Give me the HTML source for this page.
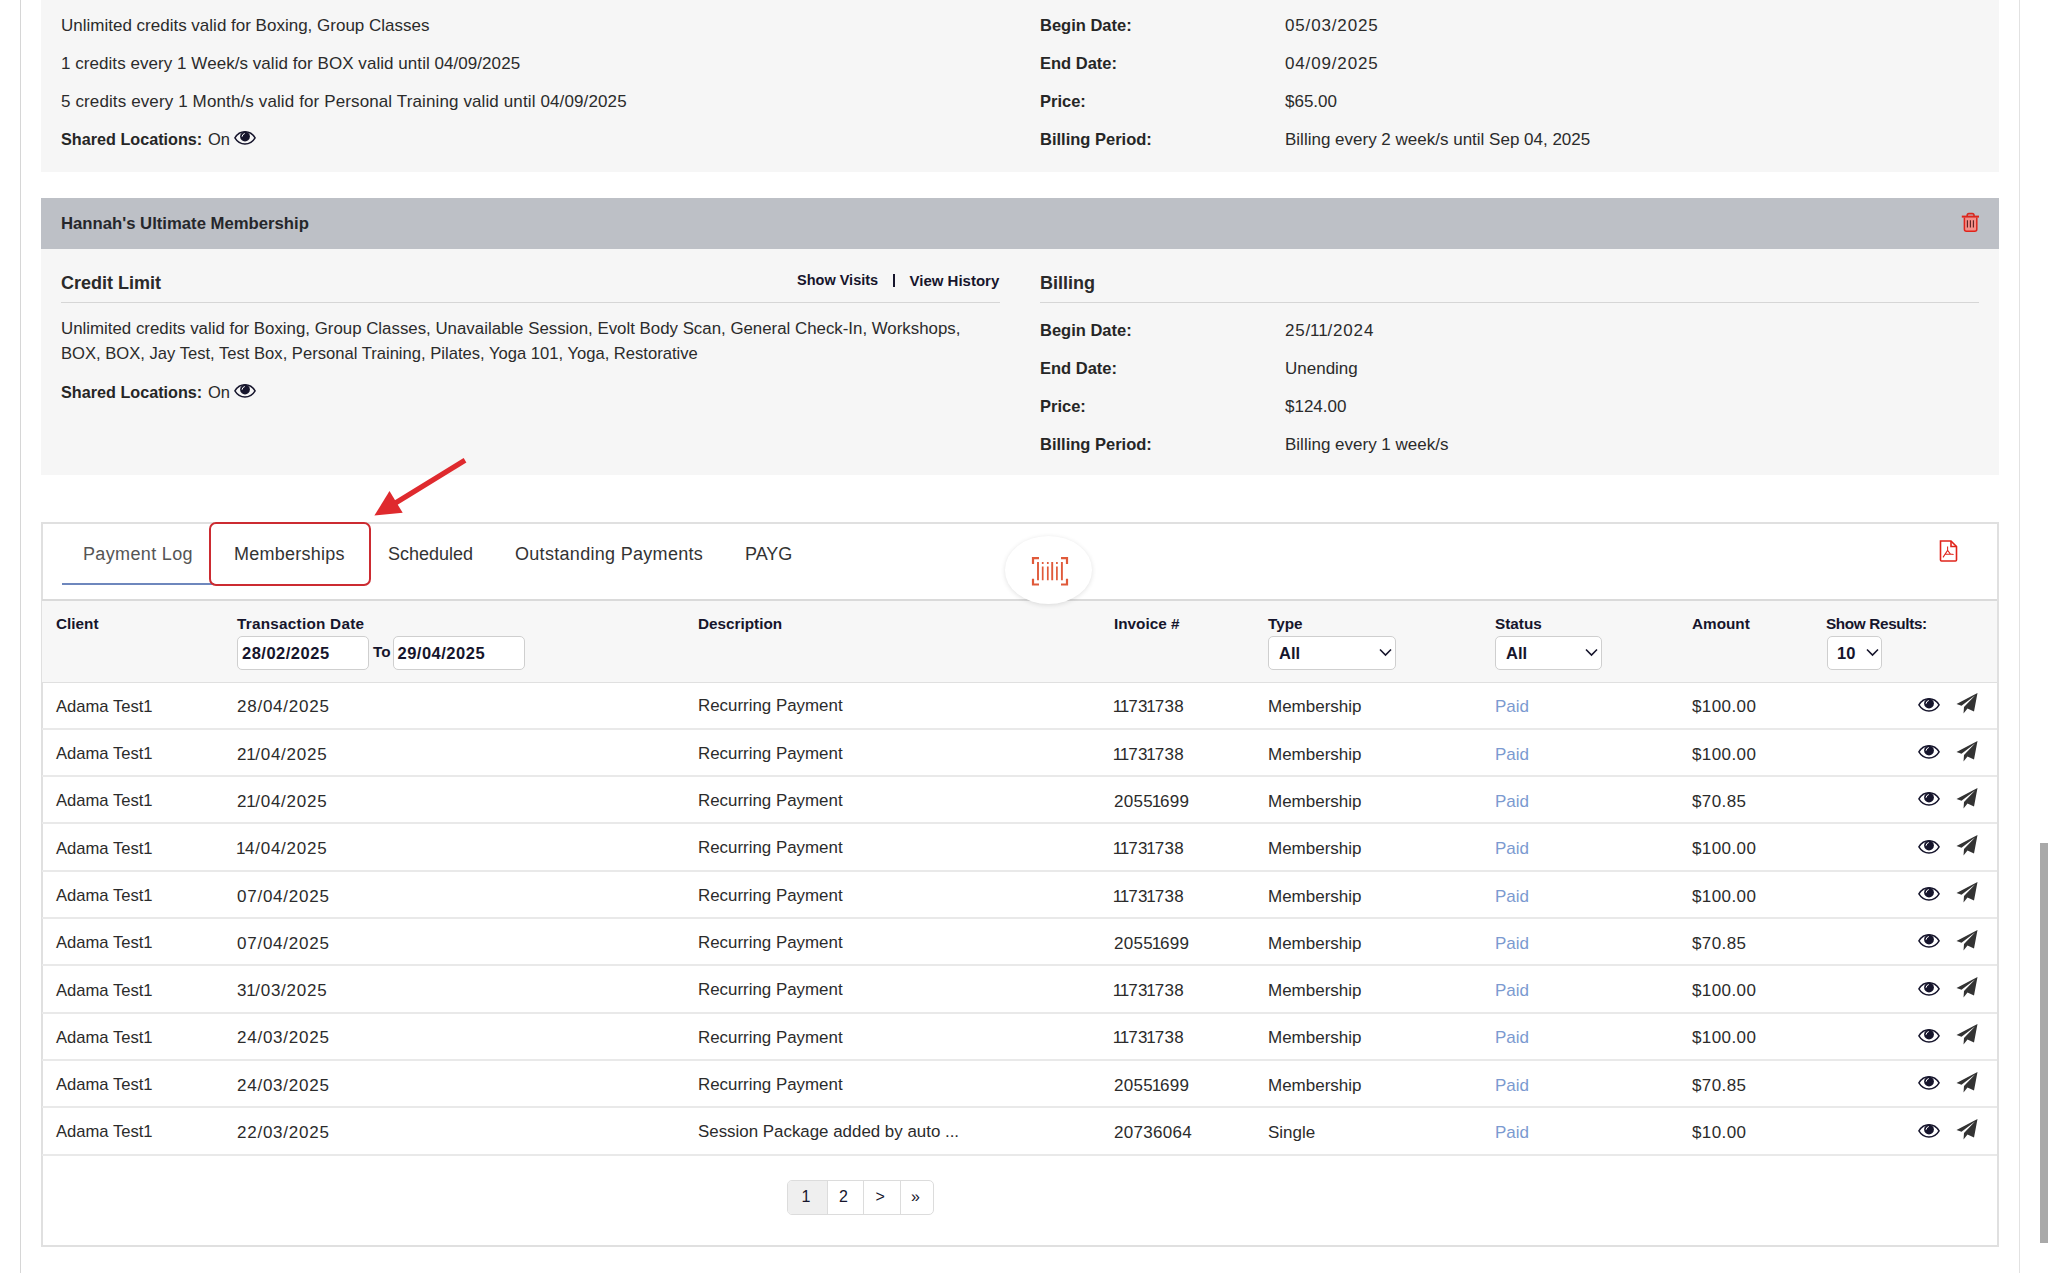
<!DOCTYPE html>
<html><head><meta charset="utf-8"><title>Payments</title>
<style>
html,body{margin:0;padding:0;background:#fff;width:2048px;height:1273px;overflow:hidden;}
body{position:relative;font-family:"Liberation Sans", sans-serif;}
.t{position:absolute;white-space:nowrap;line-height:1;}
.t b{font-weight:700;}
.r{position:absolute;}
svg{display:block;}
</style></head><body>
<div class="r" style="left:20px;top:0px;width:1px;height:1273px;background:#d6d6d6"></div>
<div class="r" style="left:2019px;top:0px;width:1px;height:1273px;background:#e2e2e2"></div>
<div class="r" style="left:2040px;top:843px;width:8px;height:400px;background:#a9a9a9"></div>
<div class="r" style="left:41px;top:0px;width:1958px;height:172px;background:#f6f6f6"></div>
<div class="t" style="left:61px;top:16.61px;font-size:17px;font-weight:400;color:#2b2b2b;">Unlimited credits valid for Boxing, Group Classes</div>
<div class="t" style="left:61px;top:54.61px;font-size:17px;font-weight:400;color:#2b2b2b;letter-spacing:0.05px">1 credits every 1 Week/s valid for BOX valid until 04/09/2025</div>
<div class="t" style="left:61px;top:92.61px;font-size:17px;font-weight:400;color:#2b2b2b;letter-spacing:0.12px">5 credits every 1 Month/s valid for Personal Training valid until 04/09/2025</div>
<div class="t" style="left:61px;top:131.29px;font-size:16.2px;font-weight:700;color:#262626;">Shared Locations:</div>
<div class="t" style="left:208px;top:131.03px;font-size:16.5px;font-weight:400;color:#2b2b2b;">On</div>
<svg width="22" height="14" viewBox="0 0 22 14" style="position:absolute;left:234px;top:131px"><path d="M0.9 6.85 C4 1.6 7.5 0.75 11 0.75 C14.5 0.75 18 1.6 21.1 6.85 C18 12.1 14.5 13 11 13 C7.5 13 4 12.1 0.9 6.85 Z" fill="none" stroke="#16152c" stroke-width="1.45"/><circle cx="11" cy="5.5" r="4.9" fill="#16152c"/><path d="M8.1 5.3 A3.1 3.1 0 0 1 10.4 2.6" stroke="#fff" stroke-width="1" fill="none" stroke-linecap="round"/></svg>
<div class="t" style="left:1040px;top:17.03px;font-size:16.5px;font-weight:700;color:#262626;">Begin Date:</div>
<div class="t" style="left:1285px;top:16.61px;font-size:17px;font-weight:400;color:#2b2b2b;letter-spacing:0.85px">05/03/2025</div>
<div class="t" style="left:1040px;top:55.03px;font-size:16.5px;font-weight:700;color:#262626;">End Date:</div>
<div class="t" style="left:1285px;top:54.61px;font-size:17px;font-weight:400;color:#2b2b2b;letter-spacing:0.85px">04/09/2025</div>
<div class="t" style="left:1040px;top:93.03px;font-size:16.5px;font-weight:700;color:#262626;">Price:</div>
<div class="t" style="left:1285px;top:92.61px;font-size:17px;font-weight:400;color:#2b2b2b;">$65.00</div>
<div class="t" style="left:1040px;top:131.03px;font-size:16.5px;font-weight:700;color:#262626;">Billing Period:</div>
<div class="t" style="left:1285px;top:130.61px;font-size:17px;font-weight:400;color:#2b2b2b;">Billing every 2 week/s until Sep 04, 2025</div>
<div class="r" style="left:41px;top:198px;width:1958px;height:51px;background:#bdc0c6"></div>
<div class="t" style="left:61px;top:215.86px;font-size:16.7px;font-weight:700;color:#26272b;">Hannah's Ultimate Membership</div>
<svg width="22" height="24" viewBox="0 0 22 24" style="position:absolute;left:1960px;top:211px" fill="none"><path d="M4.4 6.5 V18.2 Q4.4 20.2 6.4 20.2 H14.8 Q16.8 20.2 16.8 18.2 V6.5" stroke="#e0241b" stroke-width="1.5" fill="#f4908a"/><path d="M1.8 5.6 H19" stroke="#e0241b" stroke-width="2"/><path d="M7.2 5.6 V4.3 Q7.2 2.6 8.9 2.6 H12.3 Q14 2.6 14 4.3 V5.6" stroke="#d8281f" stroke-width="1.6"/><path d="M7.4 9.2 V16.6 M10.4 9.2 V16.6 M13.4 9.2 V16.6" stroke="#5a1f1f" stroke-width="1.1"/></svg>
<div class="r" style="left:41px;top:249px;width:1958px;height:226px;background:#f6f6f6"></div>
<div class="t" style="left:61px;top:274.36px;font-size:18px;font-weight:700;color:#2a2a2a;">Credit Limit</div>
<div class="t" style="left:797px;top:272.93px;font-size:14.5px;font-weight:700;color:#16152c;">Show Visits</div>
<div class="r" style="left:893px;top:274px;width:1.6px;height:13px;background:#16152c"></div>
<div class="t" style="left:909.5px;top:272.50px;font-size:15px;font-weight:700;color:#16152c;">View History</div>
<div class="r" style="left:61px;top:302px;width:939px;height:1px;background:#d6d6d6"></div>
<div class="t" style="left:1040px;top:274.36px;font-size:18px;font-weight:700;color:#2a2a2a;">Billing</div>
<div class="r" style="left:1040px;top:302px;width:939px;height:1px;background:#d6d6d6"></div>
<div class="t" style="left:61px;top:321.34px;font-size:16.85px;font-weight:400;color:#2b2b2b;">Unlimited credits valid for Boxing, Group Classes, Unavailable Session, Evolt Body Scan, General Check-In, Workshops,</div>
<div class="t" style="left:61px;top:346.45px;font-size:16.6px;font-weight:400;color:#2b2b2b;">BOX, BOX, Jay Test, Test Box, Personal Training, Pilates, Yoga 101, Yoga, Restorative</div>
<div class="t" style="left:61px;top:384.29px;font-size:16.2px;font-weight:700;color:#262626;">Shared Locations:</div>
<div class="t" style="left:208px;top:384.03px;font-size:16.5px;font-weight:400;color:#2b2b2b;">On</div>
<svg width="22" height="14" viewBox="0 0 22 14" style="position:absolute;left:234px;top:384px"><path d="M0.9 6.85 C4 1.6 7.5 0.75 11 0.75 C14.5 0.75 18 1.6 21.1 6.85 C18 12.1 14.5 13 11 13 C7.5 13 4 12.1 0.9 6.85 Z" fill="none" stroke="#16152c" stroke-width="1.45"/><circle cx="11" cy="5.5" r="4.9" fill="#16152c"/><path d="M8.1 5.3 A3.1 3.1 0 0 1 10.4 2.6" stroke="#fff" stroke-width="1" fill="none" stroke-linecap="round"/></svg>
<div class="t" style="left:1040px;top:322.03px;font-size:16.5px;font-weight:700;color:#262626;">Begin Date:</div>
<div class="t" style="left:1285px;top:321.61px;font-size:17px;font-weight:400;color:#2b2b2b;letter-spacing:0.85px">25/<span style="margin-left:-1.10px;letter-spacing:-0.25px">1</span><span style="margin-left:-1.10px;letter-spacing:-0.25px">1</span>/2024</div>
<div class="t" style="left:1040px;top:360.03px;font-size:16.5px;font-weight:700;color:#262626;">End Date:</div>
<div class="t" style="left:1285px;top:359.61px;font-size:17px;font-weight:400;color:#2b2b2b;">Unending</div>
<div class="t" style="left:1040px;top:398.03px;font-size:16.5px;font-weight:700;color:#262626;">Price:</div>
<div class="t" style="left:1285px;top:397.61px;font-size:17px;font-weight:400;color:#2b2b2b;">$124.00</div>
<div class="t" style="left:1040px;top:436.03px;font-size:16.5px;font-weight:700;color:#262626;">Billing Period:</div>
<div class="t" style="left:1285px;top:435.61px;font-size:17px;font-weight:400;color:#2b2b2b;">Billing every 1 week/s</div>
<svg width="120" height="80" viewBox="0 0 120 80" style="position:absolute;left:360px;top:450px"><path d="M105 10.2 L33 54.5" stroke="#df2a2e" stroke-width="5.2" stroke-linecap="butt"/><path d="M14.4 65.6 L29.5 41.1 L42.7 62.8 Z" fill="#df2a2e"/></svg>
<div class="r" style="left:41px;top:522px;width:1958px;height:725px;border:2px solid #e0e0e0;box-sizing:border-box;background:#fff"></div>
<div class="t" style="left:83px;top:545.26px;font-size:18px;font-weight:400;color:#555;letter-spacing:0.35px">Payment Log</div>
<div class="t" style="left:234px;top:545.26px;font-size:18px;font-weight:400;color:#333;letter-spacing:0.25px">Memberships</div>
<div class="t" style="left:388px;top:545.26px;font-size:18px;font-weight:400;color:#333;">Scheduled</div>
<div class="t" style="left:515px;top:545.26px;font-size:18px;font-weight:400;color:#333;letter-spacing:0.3px">Outstanding Payments</div>
<div class="t" style="left:745px;top:545.26px;font-size:18px;font-weight:400;color:#333;">PAYG</div>
<div class="r" style="left:62px;top:583px;width:152px;height:2px;background:#6e87bd"></div>
<div class="r" style="left:209px;top:522px;width:161.5px;height:63.5px;border:2.8px solid #cc2b31;border-radius:7px;box-sizing:border-box"></div>
<div class="r" style="left:42px;top:599px;width:1955px;height:2px;background:#dadada"></div>
<svg width="22" height="24" viewBox="0 0 22 24" style="position:absolute;left:1938px;top:539px" fill="none" stroke="#e0241b" stroke-width="1.6"><path d="M2.5 2 H13 L18.5 7.5 V21 Q18.5 22 17.5 22 H3.5 Q2.5 22 2.5 21 Z"/><path d="M13 2 V7.5 H18.5" /><path d="M9.6 7.4 V11.4 L5 18.4 M9.6 11.4 L12.4 15.1 L15.6 15.5 M7.3 15.3 L12.4 15.1" stroke-width="1.05"/></svg>
<div class="r" style="left:42px;top:601px;width:1955px;height:81px;background:#f7f7f7"></div>
<div class="r" style="left:42px;top:681.5px;width:1955px;height:1.5px;background:#e0e0e0"></div>
<div class="r" style="left:1005px;top:536px;width:87px;height:67.5px;border-radius:50%;background:#fff;box-shadow:0 1px 5px rgba(0,0,0,0.12)"></div>
<svg width="40" height="34" viewBox="0 0 40 34" style="position:absolute;left:1030px;top:554px" fill="none" stroke="#e05a3a"><path d="M3 10 V4.2 H9 M31 4.2 H37 V10 M3 24.8 V30.5 H9 M31 30.5 H37 V24.8" stroke-width="2.2"/><path d="M8 8 V26.3 M22.2 8 V26.3 M31.9 8 V26.3" stroke-width="1.9"/><path d="M12.7 12.5 V26.3 M17.8 12.5 V26.3 M26.9 12.5 V26.3 M12.7 8 V10 M17.8 8 V10 M26.9 8 V10" stroke-width="1.7"/></svg>
<div class="t" style="left:56px;top:616.35px;font-size:15.3px;font-weight:700;color:#16152c;letter-spacing:0px">Client</div>
<div class="t" style="left:237px;top:616.35px;font-size:15.3px;font-weight:700;color:#16152c;letter-spacing:0.25px">Transaction Date</div>
<div class="t" style="left:698px;top:616.35px;font-size:15.3px;font-weight:700;color:#16152c;letter-spacing:0px">Description</div>
<div class="t" style="left:1114px;top:616.35px;font-size:15.3px;font-weight:700;color:#16152c;letter-spacing:0px">Invoice #</div>
<div class="t" style="left:1268px;top:616.35px;font-size:15.3px;font-weight:700;color:#16152c;letter-spacing:0px">Type</div>
<div class="t" style="left:1495px;top:616.35px;font-size:15.3px;font-weight:700;color:#16152c;letter-spacing:0px">Status</div>
<div class="t" style="left:1692px;top:616.35px;font-size:15.3px;font-weight:700;color:#16152c;letter-spacing:0px">Amount</div>
<div class="t" style="left:1826px;top:616.35px;font-size:15.3px;font-weight:700;color:#16152c;letter-spacing:-0.35px">Show Results:</div>
<div class="r" style="left:237px;top:636px;width:132px;height:34px;border:1px solid #cfcfcf;border-radius:5px;background:#fff;box-sizing:border-box"></div>
<div class="r" style="left:393px;top:636px;width:132px;height:34px;border:1px solid #cfcfcf;border-radius:5px;background:#fff;box-sizing:border-box"></div>
<div class="r" style="left:1268px;top:636px;width:128px;height:34px;border:1px solid #cfcfcf;border-radius:5px;background:#fff;box-sizing:border-box"></div>
<div class="r" style="left:1495px;top:636px;width:107px;height:34px;border:1px solid #cfcfcf;border-radius:5px;background:#fff;box-sizing:border-box"></div>
<div class="r" style="left:1827px;top:636px;width:55px;height:34px;border:1px solid #cfcfcf;border-radius:5px;background:#fff;box-sizing:border-box"></div>
<div class="t" style="left:242px;top:644.63px;font-size:16.5px;font-weight:700;color:#16152c;letter-spacing:0.5px">28/02/2025</div>
<div class="t" style="left:373px;top:643.55px;font-size:15.3px;font-weight:700;color:#16152c;">To</div>
<div class="t" style="left:397.5px;top:644.63px;font-size:16.5px;font-weight:700;color:#16152c;letter-spacing:0.5px">29/04/2025</div>
<div class="t" style="left:1279px;top:644.63px;font-size:16.5px;font-weight:700;color:#16152c;">All</div>
<div class="t" style="left:1506px;top:644.63px;font-size:16.5px;font-weight:700;color:#16152c;">All</div>
<div class="t" style="left:1837px;top:644.63px;font-size:16.5px;font-weight:700;color:#16152c;">10</div>
<svg width="13" height="9" viewBox="0 0 13 9" style="position:absolute;left:1379px;top:648px"><path d="M1 1.5 L6.5 7 L12 1.5" fill="none" stroke="#16152c" stroke-width="1.6"/></svg>
<svg width="13" height="9" viewBox="0 0 13 9" style="position:absolute;left:1584.5px;top:648px"><path d="M1 1.5 L6.5 7 L12 1.5" fill="none" stroke="#16152c" stroke-width="1.6"/></svg>
<svg width="13" height="9" viewBox="0 0 13 9" style="position:absolute;left:1865.5px;top:648px"><path d="M1 1.5 L6.5 7 L12 1.5" fill="none" stroke="#16152c" stroke-width="1.6"/></svg>
<div class="t" style="left:56px;top:698.65px;font-size:16.6px;font-weight:400;color:#2b2b2b;">Adama Test1</div>
<div class="t" style="left:237px;top:698.31px;font-size:17px;font-weight:400;color:#2b2b2b;letter-spacing:0.75px">28/04/2025</div>
<div class="t" style="left:698px;top:698.39px;font-size:16.9px;font-weight:400;color:#2b2b2b;">Recurring Payment</div>
<div class="t" style="left:1114px;top:698.31px;font-size:17px;font-weight:400;color:#2b2b2b;letter-spacing:0.3px"><span style="margin-left:-1.30px;letter-spacing:-1.10px">1</span><span style="margin-left:-1.30px;letter-spacing:-1.10px">1</span>73<span style="margin-left:-1.30px;letter-spacing:-1.10px">1</span>738</div>
<div class="t" style="left:1268px;top:698.31px;font-size:17px;font-weight:400;color:#2b2b2b;">Membership</div>
<div class="t" style="left:1495px;top:698.31px;font-size:17px;font-weight:400;color:#7b9ad0;">Paid</div>
<div class="t" style="left:1692px;top:698.31px;font-size:17px;font-weight:400;color:#2b2b2b;letter-spacing:0.4px">$100.00</div>
<svg width="22" height="14" viewBox="0 0 22 14" style="position:absolute;left:1918px;top:697.7px"><path d="M0.9 6.85 C4 1.6 7.5 0.75 11 0.75 C14.5 0.75 18 1.6 21.1 6.85 C18 12.1 14.5 13 11 13 C7.5 13 4 12.1 0.9 6.85 Z" fill="none" stroke="#16152c" stroke-width="1.45"/><circle cx="11" cy="5.5" r="4.9" fill="#16152c"/><path d="M8.1 5.3 A3.1 3.1 0 0 1 10.4 2.6" stroke="#fff" stroke-width="1" fill="none" stroke-linecap="round"/></svg>
<svg width="24" height="22" viewBox="0 0 24 22" style="position:absolute;left:1955px;top:692.2px"><path d="M22.5 1 L1.5 12 L6.5 13.8 L20 3.5 L9 15 L8.5 21.5 L12.5 16.5 L19 19.5 Z" fill="#333"/></svg>
<div class="r" style="left:42px;top:728px;width:1955px;height:2px;background:#e9e9e9"></div>
<div class="t" style="left:56px;top:745.96px;font-size:16.6px;font-weight:400;color:#2b2b2b;">Adama Test1</div>
<div class="t" style="left:237px;top:745.62px;font-size:17px;font-weight:400;color:#2b2b2b;letter-spacing:0.75px">2<span style="margin-left:-1.10px;letter-spacing:-0.35px">1</span>/04/2025</div>
<div class="t" style="left:698px;top:745.70px;font-size:16.9px;font-weight:400;color:#2b2b2b;">Recurring Payment</div>
<div class="t" style="left:1114px;top:745.62px;font-size:17px;font-weight:400;color:#2b2b2b;letter-spacing:0.3px"><span style="margin-left:-1.30px;letter-spacing:-1.10px">1</span><span style="margin-left:-1.30px;letter-spacing:-1.10px">1</span>73<span style="margin-left:-1.30px;letter-spacing:-1.10px">1</span>738</div>
<div class="t" style="left:1268px;top:745.62px;font-size:17px;font-weight:400;color:#2b2b2b;">Membership</div>
<div class="t" style="left:1495px;top:745.62px;font-size:17px;font-weight:400;color:#7b9ad0;">Paid</div>
<div class="t" style="left:1692px;top:745.62px;font-size:17px;font-weight:400;color:#2b2b2b;letter-spacing:0.4px">$100.00</div>
<svg width="22" height="14" viewBox="0 0 22 14" style="position:absolute;left:1918px;top:745.0px"><path d="M0.9 6.85 C4 1.6 7.5 0.75 11 0.75 C14.5 0.75 18 1.6 21.1 6.85 C18 12.1 14.5 13 11 13 C7.5 13 4 12.1 0.9 6.85 Z" fill="none" stroke="#16152c" stroke-width="1.45"/><circle cx="11" cy="5.5" r="4.9" fill="#16152c"/><path d="M8.1 5.3 A3.1 3.1 0 0 1 10.4 2.6" stroke="#fff" stroke-width="1" fill="none" stroke-linecap="round"/></svg>
<svg width="24" height="22" viewBox="0 0 24 22" style="position:absolute;left:1955px;top:739.5px"><path d="M22.5 1 L1.5 12 L6.5 13.8 L20 3.5 L9 15 L8.5 21.5 L12.5 16.5 L19 19.5 Z" fill="#333"/></svg>
<div class="r" style="left:42px;top:775px;width:1955px;height:2px;background:#e9e9e9"></div>
<div class="t" style="left:56px;top:793.27px;font-size:16.6px;font-weight:400;color:#2b2b2b;">Adama Test1</div>
<div class="t" style="left:237px;top:792.93px;font-size:17px;font-weight:400;color:#2b2b2b;letter-spacing:0.75px">2<span style="margin-left:-1.10px;letter-spacing:-0.35px">1</span>/04/2025</div>
<div class="t" style="left:698px;top:793.01px;font-size:16.9px;font-weight:400;color:#2b2b2b;">Recurring Payment</div>
<div class="t" style="left:1114px;top:792.93px;font-size:17px;font-weight:400;color:#2b2b2b;letter-spacing:0.3px">2055<span style="margin-left:-1.30px;letter-spacing:-1.10px">1</span>699</div>
<div class="t" style="left:1268px;top:792.93px;font-size:17px;font-weight:400;color:#2b2b2b;">Membership</div>
<div class="t" style="left:1495px;top:792.93px;font-size:17px;font-weight:400;color:#7b9ad0;">Paid</div>
<div class="t" style="left:1692px;top:792.93px;font-size:17px;font-weight:400;color:#2b2b2b;letter-spacing:0.4px">$70.85</div>
<svg width="22" height="14" viewBox="0 0 22 14" style="position:absolute;left:1918px;top:792.3px"><path d="M0.9 6.85 C4 1.6 7.5 0.75 11 0.75 C14.5 0.75 18 1.6 21.1 6.85 C18 12.1 14.5 13 11 13 C7.5 13 4 12.1 0.9 6.85 Z" fill="none" stroke="#16152c" stroke-width="1.45"/><circle cx="11" cy="5.5" r="4.9" fill="#16152c"/><path d="M8.1 5.3 A3.1 3.1 0 0 1 10.4 2.6" stroke="#fff" stroke-width="1" fill="none" stroke-linecap="round"/></svg>
<svg width="24" height="22" viewBox="0 0 24 22" style="position:absolute;left:1955px;top:786.8px"><path d="M22.5 1 L1.5 12 L6.5 13.8 L20 3.5 L9 15 L8.5 21.5 L12.5 16.5 L19 19.5 Z" fill="#333"/></svg>
<div class="r" style="left:42px;top:822px;width:1955px;height:2px;background:#e9e9e9"></div>
<div class="t" style="left:56px;top:840.58px;font-size:16.6px;font-weight:400;color:#2b2b2b;">Adama Test1</div>
<div class="t" style="left:237px;top:840.24px;font-size:17px;font-weight:400;color:#2b2b2b;letter-spacing:0.75px"><span style="margin-left:-1.10px;letter-spacing:-0.35px">1</span>4/04/2025</div>
<div class="t" style="left:698px;top:840.32px;font-size:16.9px;font-weight:400;color:#2b2b2b;">Recurring Payment</div>
<div class="t" style="left:1114px;top:840.24px;font-size:17px;font-weight:400;color:#2b2b2b;letter-spacing:0.3px"><span style="margin-left:-1.30px;letter-spacing:-1.10px">1</span><span style="margin-left:-1.30px;letter-spacing:-1.10px">1</span>73<span style="margin-left:-1.30px;letter-spacing:-1.10px">1</span>738</div>
<div class="t" style="left:1268px;top:840.24px;font-size:17px;font-weight:400;color:#2b2b2b;">Membership</div>
<div class="t" style="left:1495px;top:840.24px;font-size:17px;font-weight:400;color:#7b9ad0;">Paid</div>
<div class="t" style="left:1692px;top:840.24px;font-size:17px;font-weight:400;color:#2b2b2b;letter-spacing:0.4px">$100.00</div>
<svg width="22" height="14" viewBox="0 0 22 14" style="position:absolute;left:1918px;top:839.6px"><path d="M0.9 6.85 C4 1.6 7.5 0.75 11 0.75 C14.5 0.75 18 1.6 21.1 6.85 C18 12.1 14.5 13 11 13 C7.5 13 4 12.1 0.9 6.85 Z" fill="none" stroke="#16152c" stroke-width="1.45"/><circle cx="11" cy="5.5" r="4.9" fill="#16152c"/><path d="M8.1 5.3 A3.1 3.1 0 0 1 10.4 2.6" stroke="#fff" stroke-width="1" fill="none" stroke-linecap="round"/></svg>
<svg width="24" height="22" viewBox="0 0 24 22" style="position:absolute;left:1955px;top:834.1px"><path d="M22.5 1 L1.5 12 L6.5 13.8 L20 3.5 L9 15 L8.5 21.5 L12.5 16.5 L19 19.5 Z" fill="#333"/></svg>
<div class="r" style="left:42px;top:870px;width:1955px;height:2px;background:#e9e9e9"></div>
<div class="t" style="left:56px;top:887.89px;font-size:16.6px;font-weight:400;color:#2b2b2b;">Adama Test1</div>
<div class="t" style="left:237px;top:887.55px;font-size:17px;font-weight:400;color:#2b2b2b;letter-spacing:0.75px">07/04/2025</div>
<div class="t" style="left:698px;top:887.63px;font-size:16.9px;font-weight:400;color:#2b2b2b;">Recurring Payment</div>
<div class="t" style="left:1114px;top:887.55px;font-size:17px;font-weight:400;color:#2b2b2b;letter-spacing:0.3px"><span style="margin-left:-1.30px;letter-spacing:-1.10px">1</span><span style="margin-left:-1.30px;letter-spacing:-1.10px">1</span>73<span style="margin-left:-1.30px;letter-spacing:-1.10px">1</span>738</div>
<div class="t" style="left:1268px;top:887.55px;font-size:17px;font-weight:400;color:#2b2b2b;">Membership</div>
<div class="t" style="left:1495px;top:887.55px;font-size:17px;font-weight:400;color:#7b9ad0;">Paid</div>
<div class="t" style="left:1692px;top:887.55px;font-size:17px;font-weight:400;color:#2b2b2b;letter-spacing:0.4px">$100.00</div>
<svg width="22" height="14" viewBox="0 0 22 14" style="position:absolute;left:1918px;top:886.9px"><path d="M0.9 6.85 C4 1.6 7.5 0.75 11 0.75 C14.5 0.75 18 1.6 21.1 6.85 C18 12.1 14.5 13 11 13 C7.5 13 4 12.1 0.9 6.85 Z" fill="none" stroke="#16152c" stroke-width="1.45"/><circle cx="11" cy="5.5" r="4.9" fill="#16152c"/><path d="M8.1 5.3 A3.1 3.1 0 0 1 10.4 2.6" stroke="#fff" stroke-width="1" fill="none" stroke-linecap="round"/></svg>
<svg width="24" height="22" viewBox="0 0 24 22" style="position:absolute;left:1955px;top:881.4px"><path d="M22.5 1 L1.5 12 L6.5 13.8 L20 3.5 L9 15 L8.5 21.5 L12.5 16.5 L19 19.5 Z" fill="#333"/></svg>
<div class="r" style="left:42px;top:917px;width:1955px;height:2px;background:#e9e9e9"></div>
<div class="t" style="left:56px;top:935.20px;font-size:16.6px;font-weight:400;color:#2b2b2b;">Adama Test1</div>
<div class="t" style="left:237px;top:934.86px;font-size:17px;font-weight:400;color:#2b2b2b;letter-spacing:0.75px">07/04/2025</div>
<div class="t" style="left:698px;top:934.94px;font-size:16.9px;font-weight:400;color:#2b2b2b;">Recurring Payment</div>
<div class="t" style="left:1114px;top:934.86px;font-size:17px;font-weight:400;color:#2b2b2b;letter-spacing:0.3px">2055<span style="margin-left:-1.30px;letter-spacing:-1.10px">1</span>699</div>
<div class="t" style="left:1268px;top:934.86px;font-size:17px;font-weight:400;color:#2b2b2b;">Membership</div>
<div class="t" style="left:1495px;top:934.86px;font-size:17px;font-weight:400;color:#7b9ad0;">Paid</div>
<div class="t" style="left:1692px;top:934.86px;font-size:17px;font-weight:400;color:#2b2b2b;letter-spacing:0.4px">$70.85</div>
<svg width="22" height="14" viewBox="0 0 22 14" style="position:absolute;left:1918px;top:934.2px"><path d="M0.9 6.85 C4 1.6 7.5 0.75 11 0.75 C14.5 0.75 18 1.6 21.1 6.85 C18 12.1 14.5 13 11 13 C7.5 13 4 12.1 0.9 6.85 Z" fill="none" stroke="#16152c" stroke-width="1.45"/><circle cx="11" cy="5.5" r="4.9" fill="#16152c"/><path d="M8.1 5.3 A3.1 3.1 0 0 1 10.4 2.6" stroke="#fff" stroke-width="1" fill="none" stroke-linecap="round"/></svg>
<svg width="24" height="22" viewBox="0 0 24 22" style="position:absolute;left:1955px;top:928.8px"><path d="M22.5 1 L1.5 12 L6.5 13.8 L20 3.5 L9 15 L8.5 21.5 L12.5 16.5 L19 19.5 Z" fill="#333"/></svg>
<div class="r" style="left:42px;top:964px;width:1955px;height:2px;background:#e9e9e9"></div>
<div class="t" style="left:56px;top:982.51px;font-size:16.6px;font-weight:400;color:#2b2b2b;">Adama Test1</div>
<div class="t" style="left:237px;top:982.17px;font-size:17px;font-weight:400;color:#2b2b2b;letter-spacing:0.75px">3<span style="margin-left:-1.10px;letter-spacing:-0.35px">1</span>/03/2025</div>
<div class="t" style="left:698px;top:982.25px;font-size:16.9px;font-weight:400;color:#2b2b2b;">Recurring Payment</div>
<div class="t" style="left:1114px;top:982.17px;font-size:17px;font-weight:400;color:#2b2b2b;letter-spacing:0.3px"><span style="margin-left:-1.30px;letter-spacing:-1.10px">1</span><span style="margin-left:-1.30px;letter-spacing:-1.10px">1</span>73<span style="margin-left:-1.30px;letter-spacing:-1.10px">1</span>738</div>
<div class="t" style="left:1268px;top:982.17px;font-size:17px;font-weight:400;color:#2b2b2b;">Membership</div>
<div class="t" style="left:1495px;top:982.17px;font-size:17px;font-weight:400;color:#7b9ad0;">Paid</div>
<div class="t" style="left:1692px;top:982.17px;font-size:17px;font-weight:400;color:#2b2b2b;letter-spacing:0.4px">$100.00</div>
<svg width="22" height="14" viewBox="0 0 22 14" style="position:absolute;left:1918px;top:981.6px"><path d="M0.9 6.85 C4 1.6 7.5 0.75 11 0.75 C14.5 0.75 18 1.6 21.1 6.85 C18 12.1 14.5 13 11 13 C7.5 13 4 12.1 0.9 6.85 Z" fill="none" stroke="#16152c" stroke-width="1.45"/><circle cx="11" cy="5.5" r="4.9" fill="#16152c"/><path d="M8.1 5.3 A3.1 3.1 0 0 1 10.4 2.6" stroke="#fff" stroke-width="1" fill="none" stroke-linecap="round"/></svg>
<svg width="24" height="22" viewBox="0 0 24 22" style="position:absolute;left:1955px;top:976.1px"><path d="M22.5 1 L1.5 12 L6.5 13.8 L20 3.5 L9 15 L8.5 21.5 L12.5 16.5 L19 19.5 Z" fill="#333"/></svg>
<div class="r" style="left:42px;top:1012px;width:1955px;height:2px;background:#e9e9e9"></div>
<div class="t" style="left:56px;top:1029.82px;font-size:16.6px;font-weight:400;color:#2b2b2b;">Adama Test1</div>
<div class="t" style="left:237px;top:1029.48px;font-size:17px;font-weight:400;color:#2b2b2b;letter-spacing:0.75px">24/03/2025</div>
<div class="t" style="left:698px;top:1029.56px;font-size:16.9px;font-weight:400;color:#2b2b2b;">Recurring Payment</div>
<div class="t" style="left:1114px;top:1029.48px;font-size:17px;font-weight:400;color:#2b2b2b;letter-spacing:0.3px"><span style="margin-left:-1.30px;letter-spacing:-1.10px">1</span><span style="margin-left:-1.30px;letter-spacing:-1.10px">1</span>73<span style="margin-left:-1.30px;letter-spacing:-1.10px">1</span>738</div>
<div class="t" style="left:1268px;top:1029.48px;font-size:17px;font-weight:400;color:#2b2b2b;">Membership</div>
<div class="t" style="left:1495px;top:1029.48px;font-size:17px;font-weight:400;color:#7b9ad0;">Paid</div>
<div class="t" style="left:1692px;top:1029.48px;font-size:17px;font-weight:400;color:#2b2b2b;letter-spacing:0.4px">$100.00</div>
<svg width="22" height="14" viewBox="0 0 22 14" style="position:absolute;left:1918px;top:1028.9px"><path d="M0.9 6.85 C4 1.6 7.5 0.75 11 0.75 C14.5 0.75 18 1.6 21.1 6.85 C18 12.1 14.5 13 11 13 C7.5 13 4 12.1 0.9 6.85 Z" fill="none" stroke="#16152c" stroke-width="1.45"/><circle cx="11" cy="5.5" r="4.9" fill="#16152c"/><path d="M8.1 5.3 A3.1 3.1 0 0 1 10.4 2.6" stroke="#fff" stroke-width="1" fill="none" stroke-linecap="round"/></svg>
<svg width="24" height="22" viewBox="0 0 24 22" style="position:absolute;left:1955px;top:1023.4px"><path d="M22.5 1 L1.5 12 L6.5 13.8 L20 3.5 L9 15 L8.5 21.5 L12.5 16.5 L19 19.5 Z" fill="#333"/></svg>
<div class="r" style="left:42px;top:1059px;width:1955px;height:2px;background:#e9e9e9"></div>
<div class="t" style="left:56px;top:1077.13px;font-size:16.6px;font-weight:400;color:#2b2b2b;">Adama Test1</div>
<div class="t" style="left:237px;top:1076.79px;font-size:17px;font-weight:400;color:#2b2b2b;letter-spacing:0.75px">24/03/2025</div>
<div class="t" style="left:698px;top:1076.87px;font-size:16.9px;font-weight:400;color:#2b2b2b;">Recurring Payment</div>
<div class="t" style="left:1114px;top:1076.79px;font-size:17px;font-weight:400;color:#2b2b2b;letter-spacing:0.3px">2055<span style="margin-left:-1.30px;letter-spacing:-1.10px">1</span>699</div>
<div class="t" style="left:1268px;top:1076.79px;font-size:17px;font-weight:400;color:#2b2b2b;">Membership</div>
<div class="t" style="left:1495px;top:1076.79px;font-size:17px;font-weight:400;color:#7b9ad0;">Paid</div>
<div class="t" style="left:1692px;top:1076.79px;font-size:17px;font-weight:400;color:#2b2b2b;letter-spacing:0.4px">$70.85</div>
<svg width="22" height="14" viewBox="0 0 22 14" style="position:absolute;left:1918px;top:1076.2px"><path d="M0.9 6.85 C4 1.6 7.5 0.75 11 0.75 C14.5 0.75 18 1.6 21.1 6.85 C18 12.1 14.5 13 11 13 C7.5 13 4 12.1 0.9 6.85 Z" fill="none" stroke="#16152c" stroke-width="1.45"/><circle cx="11" cy="5.5" r="4.9" fill="#16152c"/><path d="M8.1 5.3 A3.1 3.1 0 0 1 10.4 2.6" stroke="#fff" stroke-width="1" fill="none" stroke-linecap="round"/></svg>
<svg width="24" height="22" viewBox="0 0 24 22" style="position:absolute;left:1955px;top:1070.7px"><path d="M22.5 1 L1.5 12 L6.5 13.8 L20 3.5 L9 15 L8.5 21.5 L12.5 16.5 L19 19.5 Z" fill="#333"/></svg>
<div class="r" style="left:42px;top:1106px;width:1955px;height:2px;background:#e9e9e9"></div>
<div class="t" style="left:56px;top:1124.44px;font-size:16.6px;font-weight:400;color:#2b2b2b;">Adama Test1</div>
<div class="t" style="left:237px;top:1124.10px;font-size:17px;font-weight:400;color:#2b2b2b;letter-spacing:0.75px">22/03/2025</div>
<div class="t" style="left:698px;top:1124.18px;font-size:16.9px;font-weight:400;color:#2b2b2b;">Session Package added by auto ...</div>
<div class="t" style="left:1114px;top:1124.10px;font-size:17px;font-weight:400;color:#2b2b2b;letter-spacing:0.3px">20736064</div>
<div class="t" style="left:1268px;top:1124.10px;font-size:17px;font-weight:400;color:#2b2b2b;">Single</div>
<div class="t" style="left:1495px;top:1124.10px;font-size:17px;font-weight:400;color:#7b9ad0;">Paid</div>
<div class="t" style="left:1692px;top:1124.10px;font-size:17px;font-weight:400;color:#2b2b2b;letter-spacing:0.4px">$10.00</div>
<svg width="22" height="14" viewBox="0 0 22 14" style="position:absolute;left:1918px;top:1123.5px"><path d="M0.9 6.85 C4 1.6 7.5 0.75 11 0.75 C14.5 0.75 18 1.6 21.1 6.85 C18 12.1 14.5 13 11 13 C7.5 13 4 12.1 0.9 6.85 Z" fill="none" stroke="#16152c" stroke-width="1.45"/><circle cx="11" cy="5.5" r="4.9" fill="#16152c"/><path d="M8.1 5.3 A3.1 3.1 0 0 1 10.4 2.6" stroke="#fff" stroke-width="1" fill="none" stroke-linecap="round"/></svg>
<svg width="24" height="22" viewBox="0 0 24 22" style="position:absolute;left:1955px;top:1118.0px"><path d="M22.5 1 L1.5 12 L6.5 13.8 L20 3.5 L9 15 L8.5 21.5 L12.5 16.5 L19 19.5 Z" fill="#333"/></svg>
<div class="r" style="left:42px;top:1154px;width:1955px;height:2px;background:#e9e9e9"></div>
<div class="r" style="left:787px;top:1179.5px;width:147px;height:35px;border:1px solid #dcdcdc;border-radius:5px;box-sizing:border-box;overflow:hidden"><div style="position:absolute;left:0;top:0;width:38.5px;height:33px;background:#efefef"></div><div style="position:absolute;left:38.5px;top:0;width:1px;height:33px;background:#dcdcdc"></div><div style="position:absolute;left:75px;top:0;width:1px;height:33px;background:#dcdcdc"></div><div style="position:absolute;left:111.5px;top:0;width:1px;height:33px;background:#dcdcdc"></div></div>
<div class="t" style="left:801.5px;top:1189.16px;font-size:16px;font-weight:400;color:#16152c;">1</div>
<div class="t" style="left:839px;top:1189.16px;font-size:16px;font-weight:400;color:#16152c;">2</div>
<div class="t" style="left:875.5px;top:1189.16px;font-size:16px;font-weight:400;color:#16152c;">&gt;</div>
<div class="t" style="left:911px;top:1189.16px;font-size:16px;font-weight:400;color:#16152c;">&raquo;</div>
</body></html>
